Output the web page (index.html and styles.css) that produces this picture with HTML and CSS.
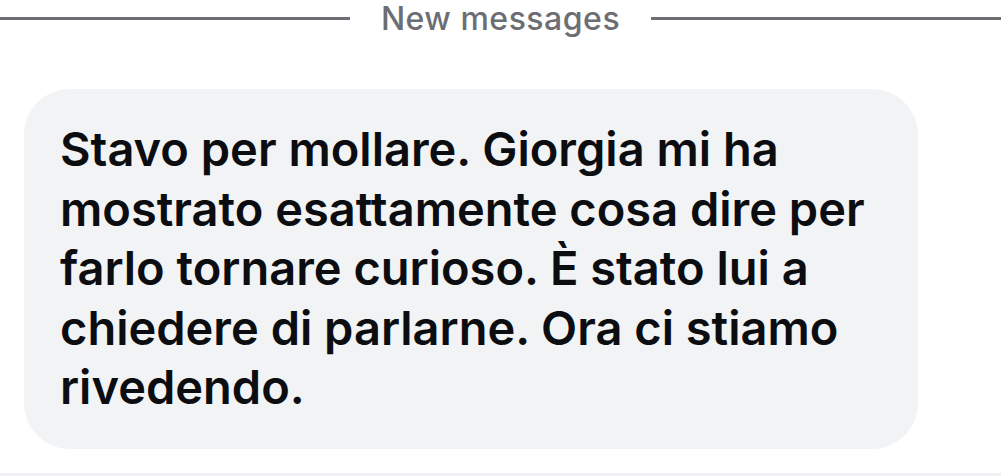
FILE: index.html
```html
<!DOCTYPE html>
<html lang="it">
<head>
<meta charset="utf-8">
<link rel="stylesheet" href="styles.css">
</head>
<body>
<div class="page">
  <div class="divider">
    <span class="line"></span>
    <span class="label">New messages</span>
    <span class="line"></span>
  </div>
  <div class="thread">
    <div class="bubble">
      <p class="text">Stavo per mollare. Giorgia mi ha<br>mostrato esattamente cosa dire per<br>farlo tornare curioso. È stato lui a<br>chiedere di parlarne. Ora ci stiamo<br>rivedendo.</p>
    </div>
  </div>
  <div class="footer"></div>
</div>
</body>
</html>
```

FILE: styles.css
```css
* { box-sizing: border-box; }
html, body { margin: 0; padding: 0; background: #ffffff; }
.page {
  width: 1001px;
  height: 476px;
  display: flex;
  flex-direction: column;
  font-family: Inter, "Noto Sans", sans-serif;
  overflow: hidden;
}
.divider {
  display: flex;
  align-items: center;
  height: 38px;
  padding-bottom: 2px;
  gap: 31px;
}
.line {
  flex: 1;
  height: 3px;
  background: #6d6e73;
}
.label {
  font-size: 32px;
  font-weight: 550;
  color: #6d6e73;
  line-height: 38px;
  letter-spacing: 0.5px;
  padding-top: 1px;
}
.thread {
  flex: 1;
  padding: 51px 0 0 24px;
}
.bubble {
  width: 894px;
  height: 360px;
  background: #f2f3f5;
  border-radius: 46px;
  padding: 30px 36px;
}
.text {
  margin: 0;
  font-size: 47px;
  font-weight: 600;
  line-height: 59.5px;
  color: #0c0d10;
  letter-spacing: 0;
}
.footer {
  height: 3px;
  background: #f2f2f4;
}
```
